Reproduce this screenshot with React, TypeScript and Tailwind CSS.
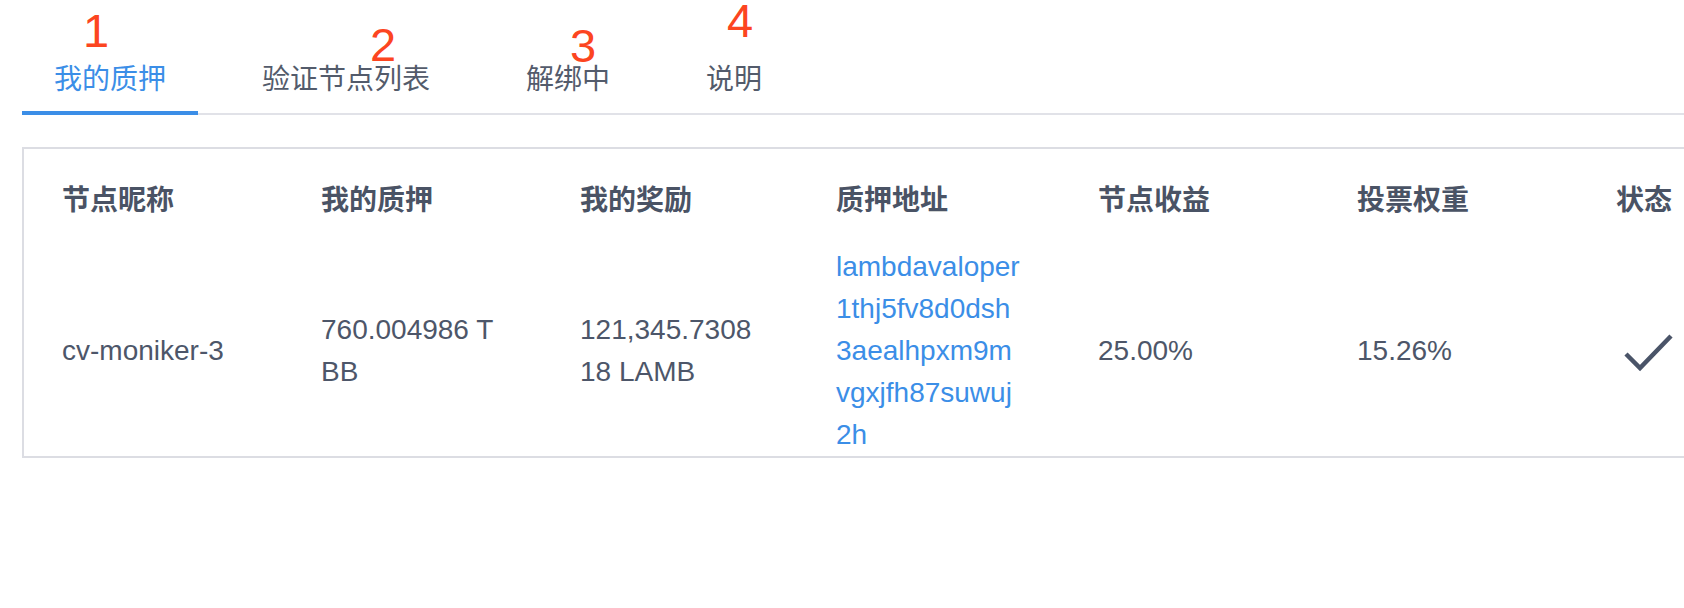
import React from 'react';

type Row = {
  name: string;
  stake: string;
  reward: string;
  address: string;
  income: string;
  weight: string;
  active: boolean;
};

const tabs = ['我的质押', '验证节点列表', '解绑中', '说明'];

const headers = ['节点昵称', '我的质押', '我的奖励', '质押地址', '节点收益', '投票权重', '状态'];

const rows: Row[] = [
  {
    name: 'cv-moniker-3',
    stake: '760.004986 TBB',
    reward: '121,345.730818 LAMB',
    address: 'lambdavaloper1thj5fv8d0dsh3aealhpxm9mvgxjfh87suwuj2h',
    income: '25.00%',
    weight: '15.26%',
    active: true,
  },
];

// red hand-written markers that sit over the tabs
const markers = [
  { label: '1', cls: 'left-[83px] top-[13px]' },
  { label: '2', cls: 'left-[370px] top-[27px]' },
  { label: '3', cls: 'left-[570px] top-[28px]' },
  { label: '4', cls: 'left-[727px] top-[3px]' },
];

// address column sits a little further left than the others
const cell = 'pl-[38px] pr-[36px]';
const addrCell = 'pl-[35px] pr-[39px]';

function Check() {
  return (
    <svg width="54" height="42" viewBox="0 0 54 42" className="ml-[3px] mt-[3px]">
      <path d="M7 22 L21 36 L52 4" fill="none" stroke="#4a5468" strokeWidth="4.5" />
    </svg>
  );
}

function App() {
  const active = 0;

  return (
    <div
      className="relative w-full h-[608px] overflow-hidden bg-white text-[#4d5669]"
      style={{ fontFamily: '"Liberation Sans", "Noto Sans CJK SC", sans-serif' }}
    >
      {/* tabs */}
      <div className="ml-[22px] pt-[59px] flex gap-[32px] border-b-2 border-[#e1e2e8]">
        {tabs.map((t, i) => (
          <div
            key={t}
            className={
              i === active
                ? 'px-[32px] pb-[10px] text-[28px] leading-[42px] text-[#3b8ee7] border-b-4 border-[#3b8ee7] mb-[-2px]'
                : 'px-[32px] pb-[12px] text-[28px] leading-[42px] text-[#535b6b]'
            }
          >
            {t}
          </div>
        ))}
      </div>

      {/* table card */}
      <div className="ml-[22px] mt-[32px] border-l-2 border-t-2 border-b-2 border-[#dcdde3] overflow-hidden">
        <div className="grid grid-cols-[repeat(7,259px)] pt-[31px]">
          {headers.map((h, i) => (
            <div key={h} className={`${i === 3 ? addrCell : cell} text-[28px] leading-[42px] font-semibold text-[#4a5365]`}>
              {h}
            </div>
          ))}
        </div>
        {rows.map((r) => (
          <div key={r.name} className="grid grid-cols-[repeat(7,259px)] items-center pt-[24px] text-[28px] leading-[42px]">
            <div className={`${cell} break-all`}>{r.name}</div>
            <div className={`${cell} break-all`}>{r.stake}</div>
            <div className={`${cell} break-all`}>{r.reward}</div>
            <div className={`${addrCell} break-all text-[#3b8ee7]`}>{r.address}</div>
            <div className={cell}>{r.income}</div>
            <div className={cell}>{r.weight}</div>
            <div className={`${cell} flex`}>{r.active ? <Check /> : null}</div>
          </div>
        ))}
      </div>

      {markers.map((m) => (
        <div key={m.label} className={`absolute ${m.cls} text-[47px] leading-[35px] text-[#fc4520]`}>
          {m.label}
        </div>
      ))}
    </div>
  );
}

export default App;
